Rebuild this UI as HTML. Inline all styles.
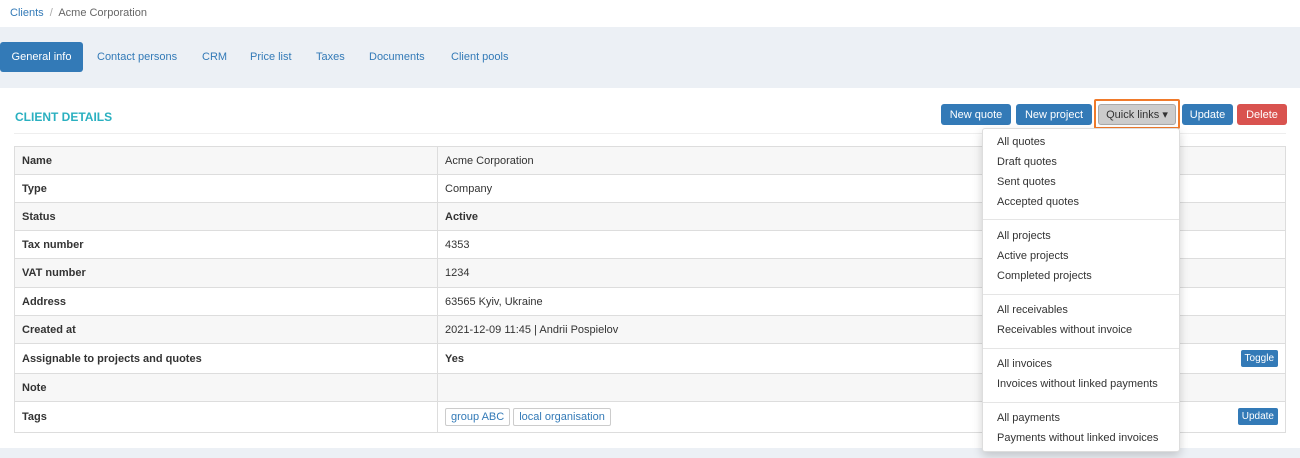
<!DOCTYPE html><html><head><style>
*{box-sizing:border-box;margin:0;padding:0}
body{width:1300px;height:458px;background:#fff;font-family:"Liberation Sans",sans-serif;font-size:11px;color:#333;position:relative;overflow:hidden}
.a{position:absolute}
.tab{position:absolute;top:42px;height:30px;line-height:31px;color:#337ab7;font-size:11px}
.btn{position:absolute;top:104px;height:21px;display:flex;align-items:center;justify-content:center;border-radius:3px;color:#fff;background:#337ab7;font-size:11px}
table{position:absolute;left:14px;top:146px;width:1272px;border-collapse:collapse}
td{border:1px solid #ddd;padding:0 7px;font-size:11px;vertical-align:middle}
td.k{width:423px;font-weight:bold}
tr:nth-child(odd) td{background:#f7f7f7}
.dd{position:absolute;left:982px;top:128px;width:198px;height:324px;background:#fff;border:1px solid #ddd;border-radius:3px;box-shadow:0 4px 10px rgba(0,0,0,.18)}
.it{position:absolute;left:14px;font-size:11px;color:#333}
.hr{position:absolute;left:0;right:0;height:1px;background:#e5e5e5}
.tag{display:inline-block;border:1px solid #ccc;border-radius:2px;padding:0 5px;height:18px;line-height:16px;color:#337ab7;margin-right:3px}
.sb{position:absolute;right:7px;height:17px;line-height:17px;padding:0 4px;background:#337ab7;color:#fff;border-radius:2px;font-size:10px}
</style></head><body>
<div class="a" style="left:10px;top:7px;color:#337ab7">Clients <span style="color:#aaa">&nbsp;/&nbsp;</span> <span style="color:#666">Acme Corporation</span></div>
<div class="a" style="left:0;top:27px;width:1300px;height:61px;background:#ecf0f5"></div>
<div class="tab" style="left:0;width:83px;background:#337ab7;color:#fff;border-radius:3px;text-align:center">General info</div>
<div class="tab" style="left:97px">Contact persons</div>
<div class="tab" style="left:202px">CRM</div>
<div class="tab" style="left:250px">Price list</div>
<div class="tab" style="left:316px">Taxes</div>
<div class="tab" style="left:369px">Documents</div>
<div class="tab" style="left:451px">Client pools</div>
<div class="a" style="left:15px;top:110px;color:#2ab0c0;font-weight:bold;font-size:12px">CLIENT DETAILS</div>
<div class="a" style="left:14px;top:133px;width:1272px;height:1px;background:#eee"></div>
<div class="btn" style="left:941px;width:70px">New quote</div>
<div class="btn" style="left:1016px;width:76px">New project</div>
<div class="a" style="left:1094px;top:99px;width:86px;height:30px;border:2px solid #f07a2a;border-radius:2px"></div>
<div class="btn" style="left:1098px;width:78px;background:#ccc;color:#333;border:1px solid #aaa">Quick links ▾</div>
<div class="btn" style="left:1182px;width:51px">Update</div>
<div class="btn" style="left:1237px;width:50px;background:#d9534f">Delete</div>
<table>
<tr style="height:28px"><td class="k">Name</td><td>Acme Corporation</td></tr>
<tr style="height:28px"><td class="k">Type</td><td>Company</td></tr>
<tr style="height:28px"><td class="k">Status</td><td><b>Active</b></td></tr>
<tr style="height:28px"><td class="k">Tax number</td><td>4353</td></tr>
<tr style="height:29px"><td class="k">VAT number</td><td>1234</td></tr>
<tr style="height:28px"><td class="k">Address</td><td>63565 Kyiv, Ukraine</td></tr>
<tr style="height:28px"><td class="k">Created at</td><td>2021-12-09 11:45 | Andrii Pospielov</td></tr>
<tr style="height:30px"><td class="k">Assignable to projects and quotes</td><td style="position:relative"><b>Yes</b><span class="sb" style="top:6px">Toggle</span></td></tr>
<tr style="height:28px"><td class="k">Note</td><td></td></tr>
<tr style="height:31px"><td class="k">Tags</td><td style="position:relative"><span class="tag">group ABC</span><span class="tag">local organisation</span><span class="sb" style="top:6px">Update</span></td></tr>
</table>
<div class="a" style="left:0;top:448px;width:1300px;height:10px;background:#ecf0f5"></div>
<div class="dd">
<div class="it" style="top:7px">All quotes</div>
<div class="it" style="top:27px">Draft quotes</div>
<div class="it" style="top:47px">Sent quotes</div>
<div class="it" style="top:67px">Accepted quotes</div>
<div class="hr" style="top:90px"></div>
<div class="it" style="top:101px">All projects</div>
<div class="it" style="top:121px">Active projects</div>
<div class="it" style="top:141px">Completed projects</div>
<div class="hr" style="top:165px"></div>
<div class="it" style="top:175px">All receivables</div>
<div class="it" style="top:195px">Receivables without invoice</div>
<div class="hr" style="top:219px"></div>
<div class="it" style="top:229px">All invoices</div>
<div class="it" style="top:249px">Invoices without linked payments</div>
<div class="hr" style="top:273px"></div>
<div class="it" style="top:283px">All payments</div>
<div class="it" style="top:303px">Payments without linked invoices</div>
</div>
</body></html>
